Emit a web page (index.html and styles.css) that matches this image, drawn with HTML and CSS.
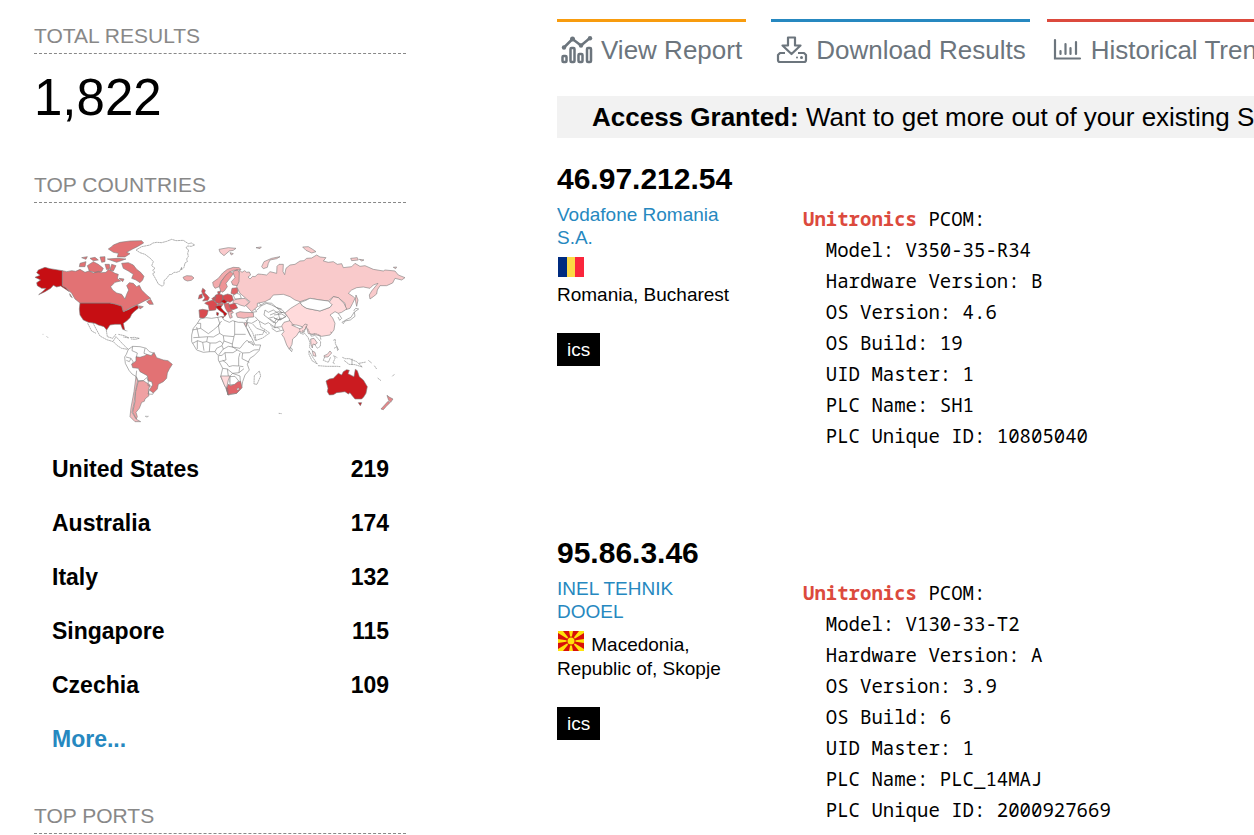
FILE: index.html
```html
<!DOCTYPE html>
<html lang="en">
<head>
<meta charset="utf-8">
<title>Search results</title>
<link rel="stylesheet" href="styles.css">
</head>
<body>
<div class="page">
  <aside class="sidebar">
    <section class="facet">
      <h2 class="facet-title">TOTAL RESULTS</h2>
      <p class="total">1,822</p>
    </section>
    <section class="facet">
      <h2 class="facet-title">TOP COUNTRIES</h2>
      <svg class="map" viewBox="34 236 372 190" role="img" aria-label="World map of results by country">
        <!-- North America -->
        <g transform="translate(30 235) scale(.3333)">
          <path fill="#c60e13" d="M25 105 45 97 60 101 97 107V152L108 158 118 170 106 162 92 153 80 156 70 151 62 160 45 170 26 179 40 168 48 160 35 160 22 152 20 143 32 135 15 127 30 121 20 113ZM150 204H240L255 207 275 213 280 230 295 224 312 215 322 210 326 219 312 230 305 238 300 248 290 258 280 265 284 285 278 283 272 268 255 268 240 270 230 285 222 275 205 270 195 265 175 262 160 255 150 240 148 222Z"/>
          <path fill="#e27274" d="M97 107 110 110 125 107 137 109 150 103 165 112 177 108 190 114 205 109 215 113 228 112 236 103 243 107 255 115 265 118 262 130 272 138 255 142 242 155 248 165 260 174 275 178 285 192 290 178 296 165 290 152 298 143 310 145 320 155 328 151 335 165 350 180 362 190 345 197 330 205 320 210 308 215 295 222 280 230 275 213 255 207 240 204H150L135 192 125 175 110 160 97 152ZM250 30 270 22 300 18 335 17 341 24 322 35 308 42 290 52 300 56 285 66 262 66 265 55 250 52 235 42 245 35ZM275 85 295 83 310 90 320 103 332 112 342 124 338 135 330 143 318 135 305 130 310 118 295 108 280 100ZM172 92 190 80 205 88 220 100 215 110 195 112 178 108ZM150 85 168 80 165 95 148 95ZM155 68 172 65 168 73ZM180 70 195 67 205 75 190 77ZM210 66 225 65 225 80 215 82ZM232 72 262 70 288 72 260 82ZM225 88 238 88 240 100 230 104ZM245 88 258 92 250 108 240 105ZM267 130 282 132 278 140ZM350 200 362 193 370 208 358 208ZM325 212 340 215 330 222ZM119 176 127 188 121 184Z"/>
        </g>
        <!-- Greenland, Europe -->
        <g transform="translate(150 235) scale(.3333)">
          <path fill="#fff" stroke-dasharray="7 1" d="M0 30 9 24 20 22 35 23 50 19 65 13 78 17 100 16 115 26 124 24 134 30 124 34 112 33 108 39 116 45 113 55 115 64 110 72 112 80 105 84 102 97 94 105 95 97 90 108 80 112 72 112 65 118 58 119 50 130 42 137 42 148 37 154 25 147 16 130 8 116 15 112 8 106 15 100 5 92 10 80 1 70-15 58-30 53-42 45-25 35Z"/>
          <path fill="#f2aaac" d="M99 127 110 122 125 123 132 129 124 136 112 138 103 134ZM190 152 188 142 205 130 218 114 232 103 250 97 268 98 273 104 250 106 238 112 225 125 212 140 208 155 195 160ZM248 110 262 104 270 115 273 140 262 152 248 150 244 140 255 128Z"/>
          <path fill="#facacc" d="M207 43 235 38 258 40 250 46 238 48 222 62 210 52ZM240 53 250 56 244 60ZM318 38 334 36 330 41ZM250 196 262 192 285 190 298 203 284 214 270 210 262 206 249 205ZM284 262 291 265 288 278 283 270Z"/>
          <path fill="#ee9496" d="M212 168 208 155 215 138 228 120 240 110 250 116 240 130 228 145 232 155 223 168 216 172Z"/>
          <path fill="#d94a4f" d="M158 160 166 166 164 174 171 180 178 188 174 196 158 198 165 189 158 178 155 169ZM148 180 156 177 157 188 145 192ZM147 225 158 223 175 226 171 240 162 250 149 248ZM170 201 182 197 190 195 202 208 197 225 178 227 175 211 164 205ZM196 181 206 176 218 180 220 200 208 206 198 203 192 194ZM218 182 233 177 246 181 250 195 240 202 218 195ZM236 209 255 205 263 219 249 224 239 222ZM190 187 198 184 194 197 185 192ZM203 170 212 168 209 178 204 176Z"/>
          <path fill="#c60e13" d="M196 215 206 211 216 211 213 218 222 229 231 236 224 245 220 235 205 224ZM200 232 206 234 204 242 200 240ZM212 245 222 245 219 250ZM212 199 222 193 232 200 224 206Z"/>
          <path fill="#df6266" d="M246 160 262 158 264 168 262 175 255 180 243 175ZM222 206 236 204 238 215 246 226 242 236 232 230 226 220ZM203 206 220 205 218 211 203 212Z"/>
          <path fill="#fff" d="M250 181 260 175 270 178 274 190 255 192Z"/>
          <path fill="#f4b6b8" d="M234 232 247 228 250 233 243 236 247 247 240 250ZM258 235 270 230 285 232 310 233 311 246 295 247 282 250 262 247Z"/>
          <!-- Middle East and Central Asia -->
          <path class="border" d="M295 216 315 222 320 230 305 232M320 226 335 212 325 203 345 190 362 192M335 212 350 205 365 210 380 218 395 222M345 225 342 240 355 250 370 246 383 255 395 250M345 225 355 232 370 225 385 235 400 232M315 245 327 258 345 268 355 263 375 277 395 275M295 248 290 262 305 265 322 255M290 265 285 282 300 305M355 250 372 264 382 248M385 235 390 255 410 242 398 226 380 218M308 267 320 280 340 287 351 295M374 277 377 262"/>
        </g>
        <!-- Russia, East Asia -->
        <g transform="translate(270 235) scale(.3333)">
          <path fill="#f9cacb" d="M-92 105-84 112-76 107-70 112-62 111-58 120-66 126-60 132-52 124-45 125-36 117-25 118-10 120 0 110 20 115 21 94 27 88 40 88 39 110 44 119 48 100 60 90 75 88 90 78 102 77 110 70 125 69 140 60 150 66 168 68 160 78 175 82 190 80 202 88 215 86 220 98 245 95 255 85 270 94 285 92 310 103 340 108 345 105 375 108 385 120 405 128 395 135 375 130 368 144 350 152 330 152 322 165 320 177 310 185 300 192 298 180 305 168 324 145 310 150 300 160 280 156 260 158 245 165 235 175 250 185 255 190 248 205 240 220 228 224 225 205 205 188 190 185 175 198 150 195 120 190 90 200 75 195 60 185 40 178 10 180 0 192-15 200-38 205-38 215-55 230-72 212-60 200-70 192-90 175-100 155-93 140ZM-25 95-18 80 5 70 30 65 20 71 0 75-5 85-8 97-20 101ZM98 36 115 35 128 43 138 50 125 54 108 46ZM242 70 262 68 265 75 245 77ZM268 73 282 75 275 78ZM370 97 380 96 377 101ZM258 180 264 195 260 214 256 195Z"/>
          <path fill="#ffdadb" d="M45 234 62 220 90 203 98 213 110 220 150 228 180 217 186 209 175 205 190 185 205 188 222 205 230 222 215 232 205 235 195 230 180 240 188 249 195 265 192 285 180 300 155 304 140 300 130 298 115 296 110 278 95 280 75 278 60 268 58 252Z"/>
          <path fill="#fff" d="M90 203 108 196 120 190 150 195 175 198 186 209 180 217 150 228 110 220 98 213Z"/>
          <path class="border" d="M205 235 215 250 209 256 204 246M257 220 266 222 255 230 252 226ZM253 231 255 244 241 255 225 258 220 266 216 262 231 253 243 247ZM45 234 25 230 0 240M60 268 40 285 20 290 5 280M12 240 35 237 48 245 30 255 12 250M0 252 18 265 32 248M-35 215-15 203 5 205 25 222 36 234M60 268 70 278 90 286 105 282 96 277"/>
        </g>
        <!-- Latin America -->
        <g transform="translate(30 325) scale(.3333)">
          <path fill="#e27274" d="M318 95 330 97 345 92 350 88 365 92 372 82 380 98 400 105 414 107 427 118 418 132 412 144 410 160 400 170 385 178 382 192 370 204 358 195 368 180 365 170 355 168 352 152 330 140 325 130 308 128 305 118 318 108Z"/>
          <path fill="#efa1a3" d="M325 168 340 167 360 180 355 195 357 212 345 222 343 229 335 232 328 250 318 262 322 275 319 282 308 262 315 230 317 200Z"/>
          <path fill="#f5bcbe" d="M318 155 323 168 316 200 312 235 306 262 318 282 332 290 315 290 300 275 303 248 312 200Z"/>
          <path class="border" stroke-dasharray="6 1" d="M173-5 185 18 198 25M188-8 200 15 210 33 230 44 250 50 262 62 275 70 293 73M229 15 232 35 248 40 258 27M250 48 258 35 270 48 280 59 295 73M265 28 283 32 297 39 280 36M300 38 313 37 328 40 316 43 303 42M38 28 40 28M50 34 54 38M284 16 292 18M345 274 355 274 350 277"/>
          <path class="border" d="M295 73 308 64 330 65 349 70 358 80 370 84 363 92M295 73 289 88 284 96 286 115 297 136 306 147 319 155 325 168 340 167 350 158 355 168M288 96 303 100 310 111 305 118M308 64 306 77 322 84 319 97M345 70 342 85 350 88M289 106 298 110 303 100M320 137 318 155M358 195 354 207 368 208 370 204M355 168 354 182 364 184"/>
        </g>
        <!-- Africa, South Asia, Oceania -->
        <g transform="translate(210 325) scale(.3333)">
          <path fill="#fff" d="M-55 30-50 10-38-5-30-18-12-22 5-20 35-25 42-15 58-8 68-13 85-8 100-8 110 10 118 26 125 38 135 60 152 60 147 77 132 92 120 100 112 118 118 135 105 150 98 170 95 188 80 205 55 210 48 190 32 155 38 130 25 105 25 92 15 80 0 80-20 82-40 75-55 50Z"/>
          <path class="border" d="M-38-5-28-5-28 10-53 15M-28 10-5 26 10 15 30-2 23-24M-40 6-33 37-50 38M-33 37-5 35 10 36 29 25 25 0 35-12M29 25 40 32 72 35 74 28V-12M74 28 107 28M40 32 42 48 36 62 20 70 15 80M42 48 67 57 72 35M-7 36-10 50-22 52-37 47-52 55M-22 52-18 77M-10 50 0 54-2 80M-38 47-38 72M0 54 18 54 30 48 39 56M36 62 40 72 26 90M39 73 55 64 68 66 82 75 69 83 45 83 36 91 26 92M67 57 67 67M67 66 90 70 103 53 111 46 132 62M82 75 98 84 118 83 132 75 146 74M98 84 96 101 118 112M90 84 86 98 86 123 100 125M45 83 48 105 28 110M38 106 50 115 57 125 68 122 86 123M38 130 52 132 68 145 87 143 102 131M52 132 55 153M68 145 61 152 60 172M68 145 90 153 91 170M87 143 89 126M111 10 122 35M131 60 125 50 114 52"/>
          <path class="border" stroke-dasharray="6 1" d="M133 152 148 138 152 153 141 178 132 177ZM108-15 115 2 128 23 136 47 158 39 179 24 164 13 153 7 148-10M138 46 135 30 158 28 164 13M181 0 190 8 205 8 210 15"/>
          <path fill="#ffdadb" d="M215 28 222 20 215 3 222-8 240-13 248-2 264 5 278 5 285-3 292-1 287 10 278 22 267 20 260 32 248 42 246 58 238 73 230 60 222 38ZM302 42 312 40 322 54 315 59 309 57 307 69 303 58ZM307 78 315 82 318 94 310 92ZM342 92 352 88 360 78 365 84 354 96 343 96ZM32 153 60 153 55 165 50 188 45 185Z"/>
          <path fill="#fff" d="M241 67 247 72 245 80 240 75ZM245 0 260 7 269 11 278 8 273 4 260 0Z"/>
          <path fill="#e0656a" d="M50 190 55 178 62 182 70 179 80 170 92 169 96 188 80 205 62 207 54 210ZM48 189 54 191 54 210Z"/>
          <path fill="#fff" d="M80 192 85 188 88 193 83 196ZM60 155 75 154 86 168 74 178 60 180Z"/>
          <path class="border" stroke-dasharray="6 1" d="M269 10 270 24 280 28 278 15M289 3 282 23 294 37 300 52 299 68 308 78M293 11 304 34 315 31 332 50 331 64 322 70M303 30 315 25 330 31 333 45M314 58 322 70M297 77 309 98 322 117 306 107 297 88ZM324 122 350 124 382 124 391 125M344 96 340 106 355 112 362 96M371 91 375 100 369 114 374 116M374 94 382 98M370 46 376 43 376 56 386 75M372 70 381 65 383 78M397 97 406 101 418 101 440 110 457 126 435 119 417 118 402 106M447 115 468 111M475 106 485 114M493 122 500 132M503 159 513 167M547 154 554 147M206 265 215 266M361 21 366 24"/>
          <path class="border" d="M426 101V119"/>
          <path fill="#cb1b20" d="M348 168 358 162 370 160 385 145 395 150 400 140 410 134 418 136 414 146 432 155 436 133 442 137 448 155 460 165 472 185 468 205 461 216 455 222 435 222 425 210 420 203 415 207 405 200 380 203 370 209 358 210 352 200 354 190ZM445 233 455 233 451 242Z"/>
          <path fill="#e8878a" d="M531 211 539 217 549 222 542 232 536 226ZM534 229 540 233 529 244 520 254 513 252 524 240Z"/>
        </g>
      </svg>
      <ul class="countries">
        <li><a href="#"><span>United States</span><span>219</span></a></li>
        <li><a href="#"><span>Australia</span><span>174</span></a></li>
        <li><a href="#"><span>Italy</span><span>132</span></a></li>
        <li><a href="#"><span>Singapore</span><span>115</span></a></li>
        <li><a href="#"><span>Czechia</span><span>109</span></a></li>
        <li><a href="#" class="more">More...</a></li>
      </ul>
    </section>
    <section class="facet">
      <h2 class="facet-title">TOP PORTS</h2>
    </section>
  </aside>

  <main class="content">
    <nav class="tabs">
      <a class="tab tab-report" href="#">
        <svg class="icon" viewBox="0 0 32 28" fill="none" stroke="currentColor" stroke-width="2.5" stroke-linejoin="round">
          <rect x="1.500" y="20" width="4" height="6" rx="1"/><rect x="9.500" y="12" width="4" height="14" rx="1"/><rect x="17.500" y="18" width="4" height="8" rx="1"/><rect x="26" y="12" width="4" height="14" rx="1"/>
          <path d="M3 11.500 11.500 3 20 9.500 29 2"/>
          <g fill="currentColor" stroke="none"><circle cx="3" cy="11.500" r="2.200"/><circle cx="11.500" cy="3" r="2.500"/><circle cx="20" cy="9.500" r="2.200"/><circle cx="29" cy="2.300" r="2.200"/></g>
        </svg>
        View Report
      </a>
      <a class="tab tab-download" href="#">
        <svg class="icon" viewBox="0 0 32 28" fill="none" stroke="currentColor" stroke-width="2.200" stroke-linejoin="round">
          <path d="M12 1.500H19V9.500H24.500L15.500 18 6.500 9.500H12Z"/>
          <path d="M9 17H4L2 19V24Q2 26 4 26H28Q30 26 30 24V19L28 17H22"/>
          <g fill="currentColor" stroke="none"><circle cx="25.500" cy="21.500" r="1.500"/><circle cx="21" cy="21.500" r="1"/></g>
        </svg>
        Download Results
      </a>
      <a class="tab tab-trends" href="#">
        <svg class="icon icon-chart" viewBox="0 0 30 28" fill="none" stroke="currentColor" stroke-width="2.200" stroke-linecap="round">
          <path d="M2 4V22.500H27M7.500 15V18M12.500 8V18M17.500 12V18M23 6V18"/>
        </svg>
        Historical Trend
      </a>
    </nav>

    <p class="banner"><strong>Access Granted:</strong> Want to get more out of your existing Shodan account?</p>

    <article class="result">
      <div class="host">
        <h3 class="ip"><a href="#">46.97.212.54</a></h3>
        <a class="org" href="#">Vodafone Romania S.A.</a>
        <p class="place">
          <svg class="flag" viewBox="0 0 26 20" role="img" aria-label="Romania"><path fill="#002b7f" d="M0 0H10V20H0Z"/><path fill="#fcd944" d="M9 0H17V20H9Z"/><path fill="#fa263c" d="M17 0H26V20H17Z"/></svg>
          Romania,&nbsp;Bucharest
        </p>
        <a class="tag" href="#">ics</a>
      </div>
      <pre class="service"><mark>Unitronics</mark> PCOM:
  Model: V350-35-R34
  Hardware Version: B
  OS Version: 4.6
  OS Build: 19
  UID Master: 1
  PLC Name: SH1
  PLC Unique ID: 10805040</pre>
    </article>

    <article class="result">
      <div class="host">
        <h3 class="ip"><a href="#">95.86.3.46</a></h3>
        <a class="org" href="#">INEL TEHNIK DOOEL</a>
        <p class="place">
          <svg class="flag" viewBox="0 0 26 20" role="img" aria-label="Macedonia"><path fill="#d8100b" d="M0 0H26V20H0Z"/><path fill="#ffe30b" d="M0 0H5L13 10 0 2ZM26 0H21L13 10 26 2ZM0 20H5L13 10 0 18ZM26 20H21L13 10 26 18ZM11 0H15L13 10ZM11 20H15L13 10ZM0 8V12L13 10ZM26 8V12L13 10Z"/><circle cx="13" cy="10" r="4.500" fill="#d8100b"/><circle cx="13" cy="10" r="3.500" fill="#ffe30b"/></svg>
          Macedonia, Republic of, Skopje
        </p>
        <a class="tag" href="#">ics</a>
      </div>
      <pre class="service"><mark>Unitronics</mark> PCOM:
  Model: V130-33-T2
  Hardware Version: A
  OS Version: 3.9
  OS Build: 6
  UID Master: 1
  PLC Name: PLC_14MAJ
  PLC Unique ID: 2000927669</pre>
    </article>
  </main>
</div>
</body>
</html>
```

FILE: styles.css
```css
* { box-sizing: border-box; }
body {
  margin: 0;
  background: #fff;
  color: #000;
  font: 19px/23px "Liberation Sans", Arial, sans-serif;
}
a { color: inherit; text-decoration: none; }
h2, h3, p, ul, pre { margin: 0; padding: 0; }

.page {
  display: grid;
  grid-template-columns: 372px minmax(0, 1fr);
  column-gap: 151px;
  padding-left: 34px;
}

/* Sidebar */
.sidebar {
  display: flex;
  flex-direction: column;
  padding-top: 18px;
}
.facet-title {
  border-bottom: 1px dashed #888;
  color: #888;
  font-size: 21px;
  font-weight: 400;
  line-height: 35px;
}
.total {
  padding: 14px 0 39px;
  font-size: 51px;
  line-height: 60px;
}
.map {
  display: block;
  width: 100%;
  margin-top: 33px;
  stroke: #7c7c7c;
  stroke-width: 1.8;
  stroke-linejoin: round;
}
.border { fill: none; }
.countries {
  padding: 16px 17px 32px 18px;
  list-style: none;
  font-size: 23px;
  font-weight: 700;
  line-height: 54px;
}
.countries a {
  display: flex;
  justify-content: space-between;
}
.countries .more { color: #2688c0; }

/* Results */
.content {
  overflow: hidden;
  padding-top: 19px;
}
.tabs {
  display: flex;
  white-space: nowrap;
  color: #6c757d;
  font-size: 26px;
  line-height: 56px;
}
.tab {
  display: flex;
  flex: none;
  align-items: center;
  gap: 8px;
  padding: 0 4px;
  border-top: 3px solid;
}
.tab-report { margin-right: 25px; border-color: #f89c0e; }
.tab-download { margin-right: 17px; padding-left: 5px; border-color: #2688c0; }
.tab-trends { padding-left: 6px; border-color: #dc4a3d; }
.icon { width: 32px; height: 28px; }
.icon-chart { width: 30px; }
.banner {
  margin-top: 18px;
  padding-left: 35px;
  overflow: hidden;
  background: #f2f2f2;
  font-size: 26px;
  line-height: 42px;
  white-space: nowrap;
}
.result {
  display: grid;
  grid-template-columns: 180px minmax(0, 1fr);
  column-gap: 66px;
  min-height: 374px;
  padding-top: 22px;
}
.ip {
  margin-bottom: 6px;
  font-size: 30px;
  line-height: 37px;
  white-space: nowrap;
}
.org {
  display: block;
  color: #2688c0;
}
.place {
  margin-top: 8px;
  line-height: 24px;
}
.flag {
  width: 26px;
  height: 20px;
  margin: 0 2px 0 1px;
  vertical-align: baseline;
}
.tag {
  display: inline-block;
  margin-top: 26px;
  padding: 0 10px;
  background: #000;
  color: #fff;
  line-height: 33px;
}
.service {
  padding-top: 44px;
  font: 19px/31px "Noto Sans Mono", "DejaVu Sans Mono", monospace;
}
.service mark {
  background: none;
  color: #dc4a3d;
  font-weight: 700;
}
```
